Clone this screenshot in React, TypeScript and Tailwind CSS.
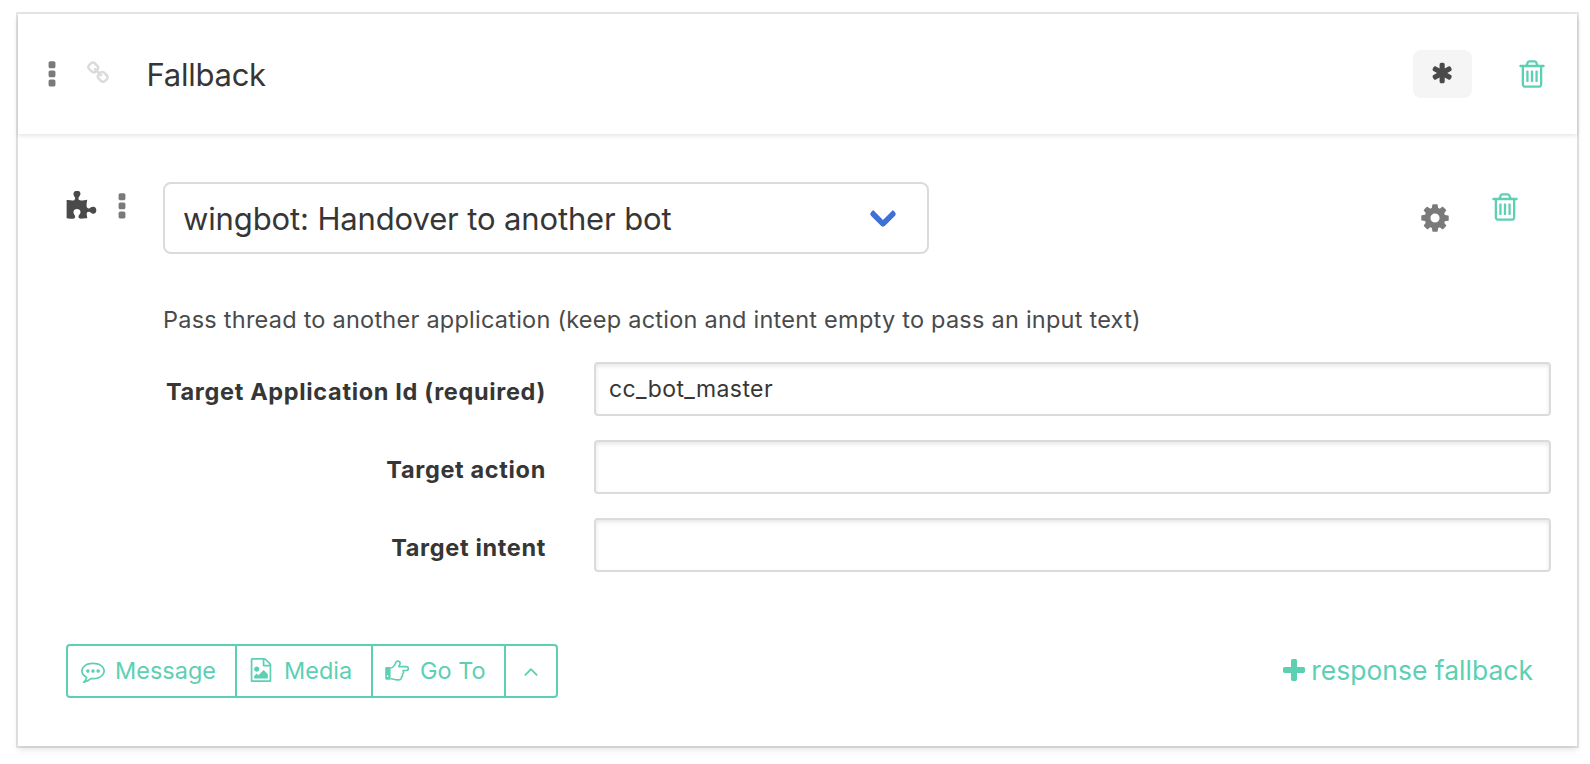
import type { ReactNode } from "react";

const ICONS = {
  trash:
    "M704 736v576q0 14-9 23t-23 9h-64q-14 0-23-9t-9-23v-576q0-14 9-23t23-9h64q14 0 23 9t9 23zm256 0v576q0 14-9 23t-23 9h-64q-14 0-23-9t-9-23v-576q0-14 9-23t23-9h64q14 0 23 9t9 23zm256 0v576q0 14-9 23t-23 9h-64q-14 0-23-9t-9-23v-576q0-14 9-23t23-9h64q14 0 23 9t9 23zm128 724v-948h-896v948q0 22 7 40.5t14.5 27 10.5 8.5h832q3 0 10.5-8.5t14.5-27 7-40.5zm-672-1076h448l-48-117q-7-9-17-11h-317q-10 2-17 11zm928 32v64q0 14-9 23t-23 9h-96v948q0 83-47 143.5t-113 60.5h-832q-66 0-113-58.5t-47-141.5v-952h-96q-14 0-23-9t-9-23v-64q0-14 9-23t23-9h309l70-167q15-37 54-63t79-26h320q40 0 79 26t54 63l70 167h309q14 0 23 9t9 23z",
  plus: "M1600 736v192q0 40-28 68t-68 28h-416v416q0 40-28 68t-68 28h-192q-40 0-68-28t-28-68v-416h-416q-40 0-68-28t-28-68v-192q0-40 28-68t68-28h416v-416q0-40 28-68t68-28h192q40 0 68 28t28 68v416h416q40 0 68 28t28 68z",
  dots: "M1088 1248v192q0 40-28 68t-68 28h-192q-40 0-68-28t-28-68v-192q0-40 28-68t68-28h192q40 0 68 28t28 68zm0-512v192q0 40-28 68t-68 28h-192q-40 0-68-28t-28-68v-192q0-40 28-68t68-28h192q40 0 68 28t28 68zm0-512v192q0 40-28 68t-68 28h-192q-40 0-68-28t-28-68v-192q0-40 28-68t68-28h192q40 0 68 28t28 68z",
  asterisk:
    "M1482 1050q46 26 59.5 77.5t-12.5 97.5l-64 110q-26 46-77.5 59.5t-97.5-12.5l-266-153v307q0 52-38 90t-90 38h-128q-52 0-90-38t-38-90v-307l-266 153q-46 26-97.5 12.5t-77.5-59.5l-64-110q-26-46-12.5-97.5t59.5-77.5l266-154-266-154q-46-26-59.5-77.5t12.5-97.5l64-110q26-46 77.5-59.5t97.5 12.5l266 153v-307q0-52 38-90t90-38h128q52 0 90 38t38 90v307l266-153q46-26 97.5-12.5t77.5 59.5l64 110q26 46 12.5 97.5t-59.5 77.5l-266 154z",
  puzzle:
    "M1755 1083q0 81-44.5 135t-123.5 54q-41 0-77.5-17.5t-59-38-56.5-38-71-17.5q-110 0-110 124 0 39 16 115t15 115v5q-22 0-33 1-34 3-97.5 11.5t-115.5 13.5-98 5q-61 0-103-26.5t-42-83.5q0-37 17.5-71t38-56.5 38-59 17.5-77.5q0-79-54-123.5t-135-44.5q-84 0-143 45.5t-59 127.5q0 43 15 83t33.5 64.5 33.5 53 15 50.5q0 45-46 89-37 35-117 35-95 0-245-24-9-2-27.5-4t-27.5-4l-13-2q-1 0-3-1-2 0-2-1v-1024q2 1 17.5 3.5t34 5 21.5 3.5q150 24 245 24 80 0 117-35 46-44 46-89 0-22-15-50.5t-33.5-53-33.5-64.5-15-83q0-82 59-127.5t144-45.5q80 0 134 44.5t54 123.5q0 41-17.5 77.5t-38 59-38 56.5-17.5 71q0 57 42 83.5t103 26.5q64 0 180-15t163-17v2q-1 2-3.5 17.5t-5 34-3.5 21.5q-24 150-24 245 0 80 35 117 44 46 89 46 22 0 50.5-15t53-33.5 64.5-33.5 83-15q82 0 127.5 59t45.5 143z",
  cog: "M1152 896q0-106-75-181t-181-75-181 75-75 181 75 181 181 75 181-75 75-181zm512-109v222q0 12-8 23t-20 13l-185 28q-19 54-39 91 35 50 107 138 10 12 10 25t-9 23q-27 37-99 108t-94 71q-12 0-26-9l-138-108q-44 23-91 38-16 136-29 186-7 28-36 28h-222q-14 0-24.5-8.5t-11.5-21.5l-28-184q-49-16-90-37l-141 107q-10 9-25 9-14 0-25-11-126-114-165-168-7-10-7-23 0-12 8-23 15-21 51-66.5t54-70.5q-27-50-41-99l-183-27q-13-2-21-12.5t-8-23.5v-222q0-12 8-23t19-13l186-28q14-46 39-92-40-57-107-138-10-12-10-24 0-10 9-23 26-36 98.5-107.5t94.5-71.5q13 0 26 10l138 107q44-23 91-38 16-136 29-186 7-28 36-28h222q14 0 24.5 8.5t11.5 21.5l28 184q49 16 90 37l142-107q9-9 24-9 13 0 25 10 129 119 165 170 7 8 7 22 0 12-8 23-15 21-51 66.5t-54 70.5q26 50 41 98l183 28q13 2 21 12.5t8 23.5z",
  link: "M1520 1216q0-40-28-68l-208-208q-28-28-68-28-42 0-72 32 3 3 19 18.5t21.5 21.5 15 19 13 25.5 3.5 27.5q0 40-28 68t-68 28q-15 0-27.5-3.5t-25.5-13-19-15-21.5-21.5-18.5-19q-33 31-33 73 0 40 28 68l206 207q27 27 68 27 40 0 68-26l147-146q28-28 28-67zm-703-705q0-40-28-68l-206-207q-28-28-68-28-39 0-68 27l-147 146q-28 28-28 67 0 40 28 68l208 208q27 27 68 27 42 0 72-31-3-3-19-18.5t-21.5-21.5-15-19-13-25.5-3.5-27.5q0-40 28-68t68-28q15 0 27.5 3.5t25.5 13 19 15 21.5 21.5 18.5 19q33-31 33-73zm895 705q0 120-85 203l-147 146q-83 83-203 83-121 0-204-85l-206-207q-83-83-83-203 0-123 88-209l-88-88q-86 88-208 88-120 0-204-84l-208-208q-84-84-84-204t85-203l147-146q83-83 203-83 121 0 204 85l206 207q83 83 83 203 0 123-88 209l88 88q86-88 208-88 120 0 204 84l208 208q84 84 84 204z",
  comment:
    "M640 896q0 53-37.5 90.5t-90.5 37.5-90.5-37.5-37.5-90.5 37.5-90.5 90.5-37.5 90.5 37.5 37.5 90.5zm384 0q0 53-37.5 90.5t-90.5 37.5-90.5-37.5-37.5-90.5 37.5-90.5 90.5-37.5 90.5 37.5 37.5 90.5zm384 0q0 53-37.5 90.5t-90.5 37.5-90.5-37.5-37.5-90.5 37.5-90.5 90.5-37.5 90.5 37.5 37.5 90.5zm-512-512q-204 0-381.5 69.5t-282 187.5-104.5 255q0 112 71.5 213.5t201.5 175.5l87 50-27 96q-24 91-70 172 152-63 275-171l43-38 57 6q69 8 130 8 204 0 381.5-69.5t282-187.5 104.5-255-104.5-255-282-187.5-381.5-69.5zm896 512q0 174-120 321.5t-326 233-450 85.5q-70 0-145-8-198 175-460 242-49 14-114 22h-5q-15 0-27-10.5t-16-27.5v-1q-3-4-.5-12t2-10 4.5-9.5l6-9 7-8.5 8-9q7-8 31-34.5t34.5-38 31-39.5 32.5-51 27-59 26-76q-157-89-247.5-220t-90.5-281q0-130 71-248.5t191-204.5 286-136.5 348-50.5 348 50.5 286 136.5 191 204.5 71 248.5z",
  image:
    "M1596 380q28 28 48 76t20 88v1152q0 40-28 68t-68 28h-1344q-40 0-68-28t-28-68v-1600q0-40 28-68t68-28h896q40 0 88 20t76 48zm-444-244v376h376q-10-29-22-41l-313-313q-12-12-41-22zm384 1528v-1024h-416q-40 0-68-28t-28-68v-416h-768v1536h1280zm-128-448v320h-1024v-192l192-192 128 128 384-384zm-832-192q-80 0-136-56t-56-136 56-136 136-56 136 56 56 136-56 136-136 56z",
  up: "M1395 1184q0 13-10 23l-50 50q-10 10-23 10t-23-10l-393-393-393 393q-10 10-23 10t-23-10l-50-50q-10-10-10-23t10-23l466-466q10-10 23-10t23 10l466 466q10 10 10 23z",
};

function Icon({ name, className }: { name: keyof typeof ICONS; className: string }) {
  return (
    <svg viewBox="0 0 1792 1792" fill="currentColor" className={`shrink-0 ${className}`} aria-hidden="true">
      <path d={ICONS[name]} />
    </svg>
  );
}

function HandIcon() {
  return (
    <svg viewBox="0 0 24 24" className="size-6 shrink-0" aria-hidden="true">
      <path
        fill="currentColor"
        fillRule="evenodd"
        d="M1.5 7.9H5.6V20.7H1.5A1.3 1.3 0 0 1 .2 19.4V9.2A1.3 1.3 0 0 1 1.5 7.9zM2.6 16.2a.9.9 0 1 0 0 1.8.9.9 0 0 0 0-1.8z"
      />
      <path
        fill="none"
        stroke="currentColor"
        strokeWidth="1.6"
        strokeLinejoin="round"
        d="M5.6 8.7H6.6C8 8.6 8.8 6.9 10 5.3C11 4 10.6 2.1 12.6 2.1C14.3 2.1 15.1 3 15.1 4.3C15.1 5.6 14 6.3 13.9 7.6H21.4A1.95 1.95 0 0 1 21.4 11.5H18C18.8 12.9 18.5 14.4 17.4 15.1C17.8 16.5 17.3 17.6 16.4 18.2C16.5 20.1 15.5 20.9 13.6 20.9H12.5C9.8 20.9 8.3 19.8 6.4 19.7H5.6"
      />
    </svg>
  );
}

function Field({ label, value }: { label: string; value?: string }) {
  return (
    <div className="flex h-[54px]">
      <label className="w-[383px] pt-3 text-right text-[23.5px] leading-9 font-bold tracking-[0.66px] text-[#363636]">
        {label}
      </label>
      <div className="ml-12 flex-1 rounded-[4px] border-2 border-[#dbdbdb] px-[13px] text-[23px] leading-[50px] tracking-[0.4px] text-[#363636] shadow-[inset_0_2px_4px_rgba(10,10,10,0.1)]">
        {value}
      </div>
    </div>
  );
}

function Action({ className, children }: { className: string; children?: ReactNode }) {
  return <button className={`flex h-full items-center ${className}`}>{children}</button>;
}

export default function App() {
  return (
    <div className="h-[764px] w-[1590px] overflow-hidden bg-white pt-[14px] pl-[18px] font-[Inter,sans-serif]">
      <div className="flex h-[732px] w-[1559px] flex-col shadow-[0_4px_6px_rgba(10,10,10,0.1),0_0_0_2px_rgba(10,10,10,0.1)]">
        <header className="flex h-[120px] shrink-0 items-center shadow-[0_2px_4px_rgba(10,10,10,0.1)]">
          <Icon name="dots" className="mt-px ml-[17.5px] size-8 text-[#7a7a7a]" />
          <Icon name="link" className="mb-[2px] ml-[18.5px] size-6 text-[#dbdbdb]" />
          <h1 className="mt-[2px] ml-[36.5px] text-[31px] leading-10 tracking-[-0.25px] text-[#363636]">Fallback</h1>
          <button className="ml-auto flex h-12 w-[59px] items-center justify-center rounded-lg bg-[#f5f5f5] pb-[2px] text-[#4a4a4a]">
            <Icon name="asterisk" className="size-6" />
          </button>
          <Icon name="trash" className="mr-[29px] ml-[44px] size-8 text-[#5dcfb3]" />
        </header>
        <main className="flex flex-1 flex-col pr-[26px] pl-12">
          <div className="mt-12 flex h-[72px]">
            <Icon name="puzzle" className="mt-[9px] -ml-px size-8 text-[#4a4a4a]" />
            <Icon name="dots" className="mt-[9px] ml-[9px] size-8 text-[#7a7a7a]" />
            <button className="ml-[25px] flex w-[766px] items-center rounded-lg border-2 border-[#dbdbdb] pr-[34px] pl-[18px] text-[31px] tracking-[-0.13px] text-[#363636]">
              <span className="mt-[2px]">wingbot: Handover to another bot</span>
              <span className="mb-2 ml-auto size-5 -rotate-45 rounded-[4px] border-b-[6px] border-l-[6px] border-[#3e70d8]" />
            </button>
            <Icon name="cog" className="mt-5 ml-auto size-8 text-[#7a7a7a]" />
            <Icon name="trash" className="mt-[8.5px] mr-[30px] ml-[38px] size-8 text-[#5dcfb3]" />
          </div>
          <p className="mt-12 ml-[97px] text-[23.5px] leading-9 tracking-[0.24px] text-[#4a4a4a]">
            Pass thread to another application (keep action and intent empty to pass an input text)
          </p>
          <div className="mt-6 ml-[97px] flex flex-col gap-6">
            <Field label="Target Application Id (required)" value="cc_bot_master" />
            <Field label="Target action" />
            <Field label="Target intent" />
          </div>
          <div className="mt-[72px] flex h-[54px] items-center text-[#5dcfb3]">
            <div className="flex h-[54px] divide-x-2 divide-[#5dcfb3] rounded-[4px] border-2 border-[#5dcfb3] text-[23.5px]">
              <Action className="w-[169px] gap-[10px] pl-[13px]">
                <Icon name="comment" className="size-6" />
                Message
              </Action>
              <Action className="w-[136px] gap-[11px] pl-[12px]">
                <Icon name="image" className="mb-[3px] size-6" />
                Media
              </Action>
              <Action className="w-[133px] gap-[11px] pl-[12px]">
                <HandIcon />
                Go To
              </Action>
              <Action className="w-[50px] justify-center">
                <Icon name="up" className="size-6" />
              </Action>
            </div>
            <button className="mr-[18px] ml-auto flex items-center gap-[3px] text-[26.5px]">
              <Icon name="plus" className="mb-px size-7" />
              response fallback
            </button>
          </div>
        </main>
      </div>
    </div>
  );
}
